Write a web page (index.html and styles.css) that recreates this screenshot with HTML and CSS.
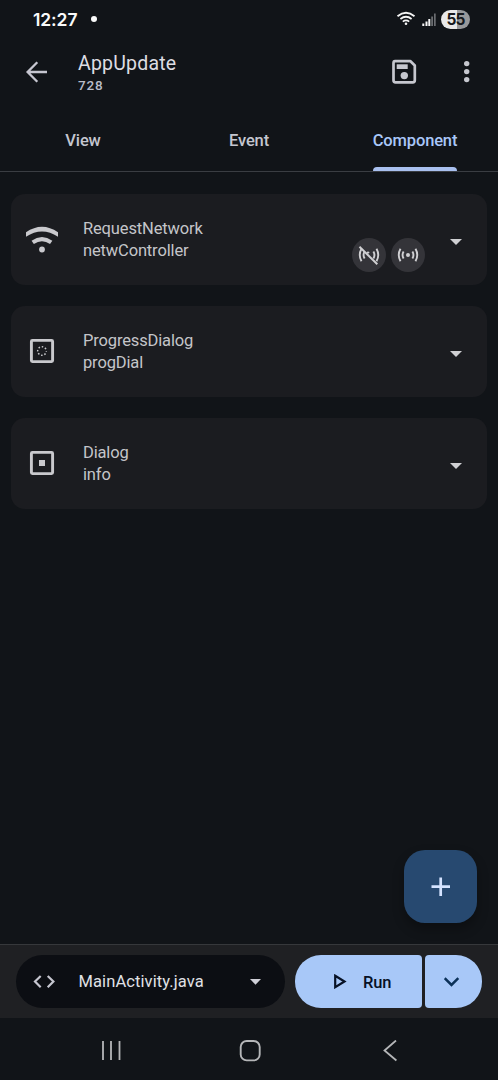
FILE: index.html
```html
<!DOCTYPE html>
<html lang="en">
<head>
<meta charset="utf-8">
<title>AppUpdate</title>
<link rel="stylesheet" href="styles.css">
</head>
<body>
<div class="screen">
  <div class="status">
    <span class="clock">12:27</span><span class="dot"></span>
    <svg class="status-wifi" width="20" height="16" viewBox="396 11 20 16" fill="none" stroke="#f5f5f5" stroke-width="1.8">
      <path d="M397.5 16.2Q406 9.3 414.500 16.2M400.400 19Q406 14.600 411.600 19M402.800 21.600Q406 19.200 409.200 21.600"/><circle cx="406" cy="23.700" r="1.300" fill="#f5f5f5" stroke="none"/>
    </svg>
    <svg class="status-signal" width="14" height="14" viewBox="0 0 14 14">
      <path fill="#f5f5f5" d="M.3 10.500h2v2.500H.3zM3.500 8.500h2V13h-2zM6.300 6h2v7h-2z"/><path fill="#6a6c70" d="M9.200 3.500H11V13H9.200zM12 .5h1.700V13H12z"/>
    </svg>
    <span class="battery">55</span>
  </div>
  <header class="appbar">
    <svg class="back" width="24" height="24" viewBox="24 60 24 24" fill="none" stroke="#c6c6d0" stroke-width="2.300"><path d="M47 72H28M37.300 62.300L27.600 72L37.300 81.700"/></svg>
    <div class="titles"><div class="title">AppUpdate</div><div class="subtitle">728</div></div>
    <svg class="save" width="26" height="26" viewBox="391 59 26 26"><path fill="none" stroke="#c6c7ce" stroke-width="2.700" stroke-linejoin="round" d="M395 61.200H410.500L414.800 65.500V80.300Q414.800 82.300 412.800 82.300H395.500Q393.500 82.300 393.500 80.300V63.200Q393.500 61.200 395 61.200Z"/><rect x="396.700" y="64.300" width="11" height="4.700" fill="#c6c7ce"/><circle cx="404.300" cy="75.600" r="3.700" fill="#c6c7ce"/></svg>
    <svg class="more" width="8" height="24" viewBox="0 0 8 24" fill="#c6c7ce"><circle cx="3.700" cy="3.600" r="2.700"/><circle cx="3.700" cy="11.600" r="2.700"/><circle cx="3.700" cy="19.600" r="2.700"/></svg>
  </header>
  <nav class="tabs">
    <div class="tab">View</div><div class="tab">Event</div><div class="tab active"><span>Component</span></div>
  </nav>
  <main class="list">
    <section class="card">
      <svg class="lead" width="36" height="30" viewBox="24 224 36 30"><path fill="#c9c9cd" d="M26 232.200Q42 221.200 58 232.200V236.800Q42 226.300 26 236.800Z"/><path fill="none" stroke="#c9c9cd" stroke-width="4" d="M32.700 242.400Q42 235.800 51.200 242.400"/><circle cx="42" cy="249.500" r="2.900" fill="#c9c9cd"/></svg>
      <div class="names"><div>RequestNetwork</div><div>netwController</div></div>
      <div class="chips">
        <span class="chip"><svg width="22" height="20" viewBox="-11 -10 22 20" fill="none" stroke="#d0d0d3" stroke-width="1.900"><path d="M-7.500-6.200Q-11 0-7.500 6.200M-4.400-3.600Q-6.500 0-4.400 3.600M4.400-3.600Q6.500 0 4.400 3.600M7.500-6.200Q11 0 7.500 6.200M-2-2Q-1-3 0-2"/><path d="M-9.500-8.200L8.300 9.200" stroke-width="2"/></svg></span>
        <span class="chip"><svg width="22" height="20" viewBox="-11 -10 22 20" fill="none" stroke="#d0d0d3" stroke-width="1.900"><path d="M-7.500-6.200Q-11 0-7.500 6.200M-4.400-3.600Q-6.500 0-4.400 3.600M4.400-3.600Q6.500 0 4.400 3.600M7.500-6.200Q11 0 7.500 6.200"/><circle r="2" fill="#d0d0d3" stroke="none"/></svg></span>
      </div>
      <svg class="caret" width="12" height="6" viewBox="0 0 12 6"><path d="M0 0H12L6 6Z" fill="#d0d0d3"/></svg>
    </section>
    <section class="card">
      <svg class="lead" width="36" height="30" viewBox="-18 -15 36 30"><rect x="-10.600" y="-10.600" width="21.200" height="21.200" rx="1" fill="none" stroke="#c9c9cd" stroke-width="2.900"/><circle r="4.300" fill="none" stroke="#c9c9cd" stroke-width="1.500" stroke-dasharray="1.500 1.877" stroke-dashoffset=".75"/></svg>
      <div class="names"><div>ProgressDialog</div><div>progDial</div></div>
      <svg class="caret" width="12" height="6" viewBox="0 0 12 6"><path d="M0 0H12L6 6Z" fill="#d0d0d3"/></svg>
    </section>
    <section class="card">
      <svg class="lead" width="36" height="30" viewBox="-18 -15 36 30"><rect x="-10.600" y="-10.600" width="21.200" height="21.200" rx="1" fill="none" stroke="#c9c9cd" stroke-width="2.900"/><rect x="-3" y="-3" width="6" height="6" fill="#c9c9cd"/></svg>
      <div class="names"><div>Dialog</div><div>info</div></div>
      <svg class="caret" width="12" height="6" viewBox="0 0 12 6"><path d="M0 0H12L6 6Z" fill="#d0d0d3"/></svg>
    </section>
  </main>
  <button class="fab" aria-label="Add"><svg width="20" height="20" viewBox="0 0 20 20"><path d="M.5 9.700H19M9.700 .5V19" stroke="#d5e3ff" stroke-width="2.700"/></svg></button>
  <footer class="bottom">
    <div class="file">
      <svg class="code" width="22" height="14" viewBox="0 0 22 14" fill="none" stroke="#c6c6d0" stroke-width="2.200"><path d="M7.700 1L2 6.500L7.700 12.200M14.700 1L20.400 6.500L14.700 12.200"/></svg>
      <span class="filename">MainActivity.java</span>
      <svg class="file-caret" width="11" height="6" viewBox="0 0 11 6"><path d="M0 0H11L5.500 5.700Z" fill="#d0d0d8"/></svg>
    </div>
    <div class="run"><svg width="14" height="15" viewBox="0 0 14 15"><path d="M2.200 1.800L11.500 7.500L2.200 13.200Z" fill="none" stroke="#071226" stroke-width="2.200"/></svg><span>Run</span></div>
    <div class="run-more"><svg width="16" height="10" viewBox="0 0 16 10"><path d="M.7 1.200L7.500 7.900L14.300 1.200" fill="none" stroke="#0b3158" stroke-width="2.500"/></svg></div>
  </footer>
  <div class="sysnav">
    <svg class="recents" width="20" height="20" viewBox="0 0 20 20"><path d="M2 0V19M10 0V19M18.500 0V19" stroke="#b5b6b8" stroke-width="1.800"/></svg>
    <svg class="home" width="22" height="22" viewBox="0 0 22 22"><rect x="1.700" y="1" width="19" height="19.400" rx="6" fill="none" stroke="#b5b6b8" stroke-width="1.900"/></svg>
    <svg class="prev" width="15" height="22" viewBox="0 0 15 22"><path d="M13 .5L1.500 10.500L13.400 20.500" fill="none" stroke="#b5b6b8" stroke-width="1.800"/></svg>
  </div>
</div>
</body>
</html>
```
FILE: styles.css
```css
* { box-sizing: border-box; }
body { margin: 0; background: #111418; font-family: Roboto, "Noto Sans", sans-serif; }
svg { display: block; flex: none; }
.screen { position: relative; width: 498px; height: 1080px; display: flex; flex-direction: column; background: #111418; overflow: hidden; }

.status { height: 38px; display: flex; align-items: center; padding: 0 28px 0 33px; flex: none; }
.clock { width: 45px; font: 600 17.5px/20px Inter, sans-serif; color: #fafafa; letter-spacing: -.1px; white-space: nowrap; padding-top: 1px; }
.dot { width: 6px; height: 6px; margin-left: 13px; border-radius: 50%; background: #fafafa; }
.status-wifi { margin-left: auto; }
.status-signal { margin: 1px 5px 0 6px; }
.battery { width: 29px; height: 19px; border-radius: 10px; background: linear-gradient(90deg, #e9e9e9 55%, #98999b 55%); color: #17191c; font: 700 15.5px/19px Inter, sans-serif; letter-spacing: -1px; text-align: center; }

.appbar { height: 68px; flex: none; display: flex; align-items: center; padding: 0 27px 0 24px; }
.titles { margin: 2px 0 0 30px; flex: 1; }
.title { font-size: 19.5px; line-height: 24px; letter-spacing: .2px; color: #dddde2; }
.subtitle { font-size: 13.500px; line-height: 19px; letter-spacing: .8px; font-weight: 500; color: #b9bdc9; }
.more { margin-left: 46px; }

.tabs { height: 66px; flex: none; display: flex; border-bottom: 1px solid #3a3d42; }
.tab { flex: 1; display: flex; justify-content: center; padding-top: 4px; line-height: 61px; font-size: 16.500px; font-weight: 500; letter-spacing: -.15px; color: #c4c6cf; }
.active { color: #a9c7f8; }
.active span { display: flex; flex-direction: column; height: 61px; }
.active span::after { content: ""; height: 4px; flex: none; margin-top: -4px; border-radius: 4px 4px 0 0; background: #a9c0ef; }

.list { flex: 1; display: flex; flex-direction: column; gap: 21px; padding: 21.500px 11px 0; }
.card { height: 91px; display: flex; align-items: center; border-radius: 14px; background: #1b1c20; padding-right: 25px; }
.lead { margin-left: 13px; }
.names { margin: 1px 0 0 23px; flex: 1; font-size: 16.500px; line-height: 22px; letter-spacing: -.15px; color: #c4c5c9; }
.chips { display: flex; gap: 5px; margin: 32px 25px 0 0; }
.chip { width: 34px; height: 34px; border-radius: 50%; background: #343439; display: flex; align-items: center; justify-content: center; }
.caret { margin-top: 5px; }

.fab { position: absolute; left: 404px; top: 850px; width: 73px; height: 73px; padding: 0; border: 0; border-radius: 21px; background: #274970; display: flex; align-items: center; justify-content: center; box-shadow: 0 6px 12px rgba(0,0,0,.3); }

.bottom { height: 74px; flex: none; display: flex; align-items: flex-start; padding: 10px 15px 0 16px; background: #1f2023; border-top: 1px solid #36383b; }
.file { width: 269px; height: 53px; border-radius: 27px; background: #0c0e13; display: flex; align-items: center; padding: 0 24px 0 17px; }
.filename { margin-left: 23.500px; flex: 1; font-size: 16.500px; letter-spacing: .1px; color: #e0e1e6; }
.run, .run-more { height: 53px; background: #a8c8f8; display: flex; align-items: center; }
.run { width: 127px; margin-left: 10px; padding-left: 38px; border-radius: 26px 4px 4px 26px; font-size: 16.500px; font-weight: 500; letter-spacing: -.2px; color: #071226; }
.run span { margin: 1px 0 0 16px; }
.run-more { width: 57px; margin-left: 3px; justify-content: center; padding-right: 4px; border-radius: 4px 26px 26px 4px; }

.sysnav { height: 62px; flex: none; display: flex; align-items: center; padding: 3px 0 0 101px; }
.home { margin-left: 118px; }
.prev { margin-left: 122px; }
```
